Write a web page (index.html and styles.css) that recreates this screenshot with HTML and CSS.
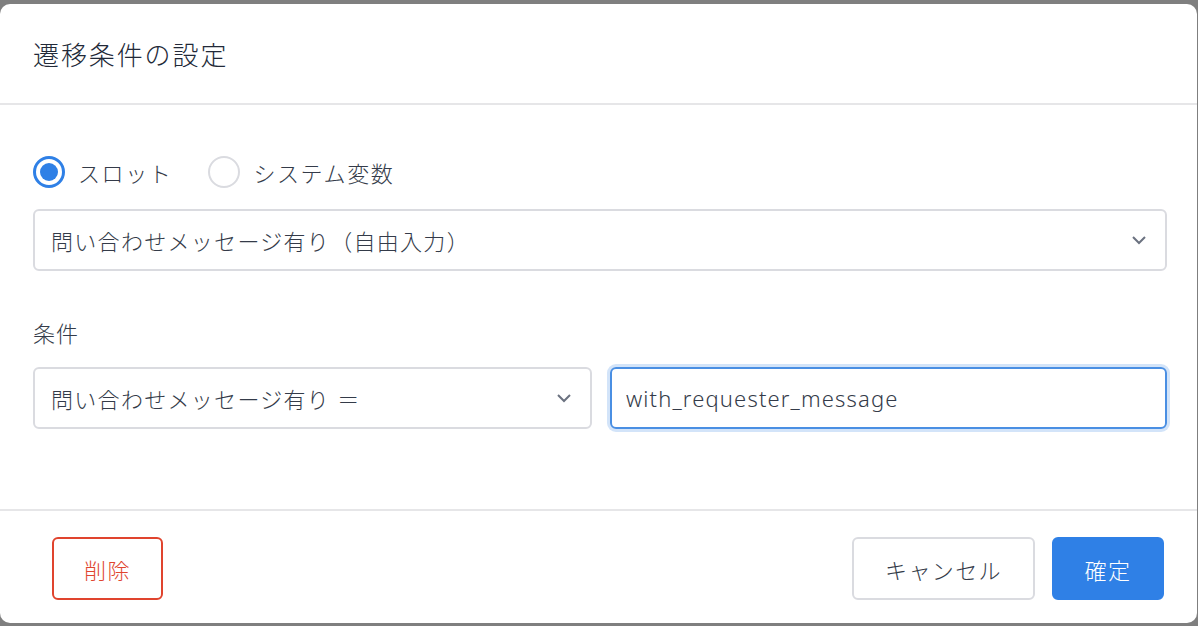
FILE: index.html
```html
<!DOCTYPE html>
<html>
	<head>
		<meta charset="UTF-8">
		<title>遷移条件の設定</title>
		<link rel="stylesheet" href="styles.css">
	</head>
	<body>
		<div class="modal">
			<div class="modalHead">
				<h1>遷移条件の設定</h1>
			</div>

			<div class="modalBody">
				<div class="radioRow">
					<label class="radio checked"><span class="dot"></span>スロット</label>
					<label class="radio"><span class="dot"></span>システム変数</label>
				</div>

				<div class="selectBox">
					<span>問い合わせメッセージ有り（自由入力）</span>
					<svg width="16" height="10" viewBox="0 0 16 10"><polyline points="2,2 8,8 14,2" fill="none" stroke="#6b7280" stroke-width="2"/></svg>
				</div>

				<p class="fieldLabel">条件</p>

				<div class="condRow">
					<div class="selectBox">
						<span>問い合わせメッセージ有り ＝</span>
						<svg width="16" height="10" viewBox="0 0 16 10"><polyline points="2,2 8,8 14,2" fill="none" stroke="#6b7280" stroke-width="2"/></svg>
					</div>
					<div class="textBox focus">with_requester_message</div>
				</div>
			</div>

			<div class="modalFoot">
				<button class="btn danger">削除</button>
				<div class="right">
					<button class="btn">キャンセル</button>
					<button class="btn primary">確定</button>
				</div>
			</div>
		</div>
	</body>
</html>
```

FILE: styles.css
```css
*{
	margin: 0;
	padding: 0;
	box-sizing: border-box;
}

html,body{
	height: 100%;
	overflow: hidden;
}

body{
	background-color: #7f7f7f;
	font-family: "Noto Sans", "Noto Sans CJK JP", sans-serif;
	font-weight: 300;
	color: #343b49;
}

.modal{
	width: 1197px;
	height: 619px;
	margin-top: 4px;
	background-color: #fff;
	border-radius: 10px;
	display: flex;
	flex-direction: column;
}

.modalHead{
	height: 101px;
	padding-left: 33px;
	display: flex;
	align-items: center;
	border-bottom: 2px solid #e6e6e8;
}

.modalHead h1{
	font-size: 26px;
	font-weight: 300;
	letter-spacing: 1.9px;
	color: #222938;
}

.modalBody{
	padding: 51px 30px 80px 33px;
	border-bottom: 2px solid #e6e6e8;
}

.radioRow{
	display: flex;
	align-items: center;
	height: 32px;
	gap: 36px;
}

.radio{
	display: flex;
	align-items: center;
	font-size: 22px;
	letter-spacing: 1.6px;
}

.radio .dot{
	width: 32px;
	height: 32px;
	border-radius: 50%;
	border: 2px solid #dadbe0;
	margin-right: 13px;
	position: relative;
}

.radio.checked .dot{
	border: 3px solid #2f80e6;
}

.radio.checked .dot::after{
	content: "";
	position: absolute;
	left: 4px;
	top: 4px;
	width: 18px;
	height: 18px;
	border-radius: 50%;
	background-color: #2f80e6;
}

.selectBox,.textBox{
	height: 62px;
	border: 2px solid #dadbe0;
	border-radius: 6px;
	display: flex;
	align-items: center;
	justify-content: space-between;
	padding: 0 18px 0 16px;
	font-size: 22px;
	letter-spacing: 1.3px;
}

.modalBody > .selectBox{
	margin-top: 21px;
}

.fieldLabel{
	margin-top: 46px;
	font-size: 22px;
	line-height: 32px;
	letter-spacing: 1px;
}

.condRow{
	margin-top: 18px;
	display: flex;
	gap: 18px;
}

.condRow > div{
	flex: 1;
}

.textBox{
	padding-left: 14px;
	letter-spacing: 1.15px;
}

.textBox.focus{
	border-color: #4a8fe3;
	box-shadow: 0 0 0 3px #d3e4f9;
}

.modalFoot{
	flex: 1;
	display: flex;
	justify-content: space-between;
	align-items: flex-start;
	padding: 26px 33px 0 52px;
}

.modalFoot .right{
	display: flex;
	gap: 17px;
}

.btn{
	height: 63px;
	padding: 0 31px;
	font-family: inherit;
	font-weight: 300;
	font-size: 22px;
	letter-spacing: 1.4px;
	color: #343b49;
	background-color: #fff;
	border: 2px solid #dadbe0;
	border-radius: 6px;
}

.btn.danger{
	width: 111px;
	padding: 0;
	color: #e0442e;
	border-color: #e0442e;
}

.btn.primary{
	width: 112px;
	padding: 0;
	color: #fff;
	background-color: #2f80e6;
	border-color: #2f80e6;
}
```
